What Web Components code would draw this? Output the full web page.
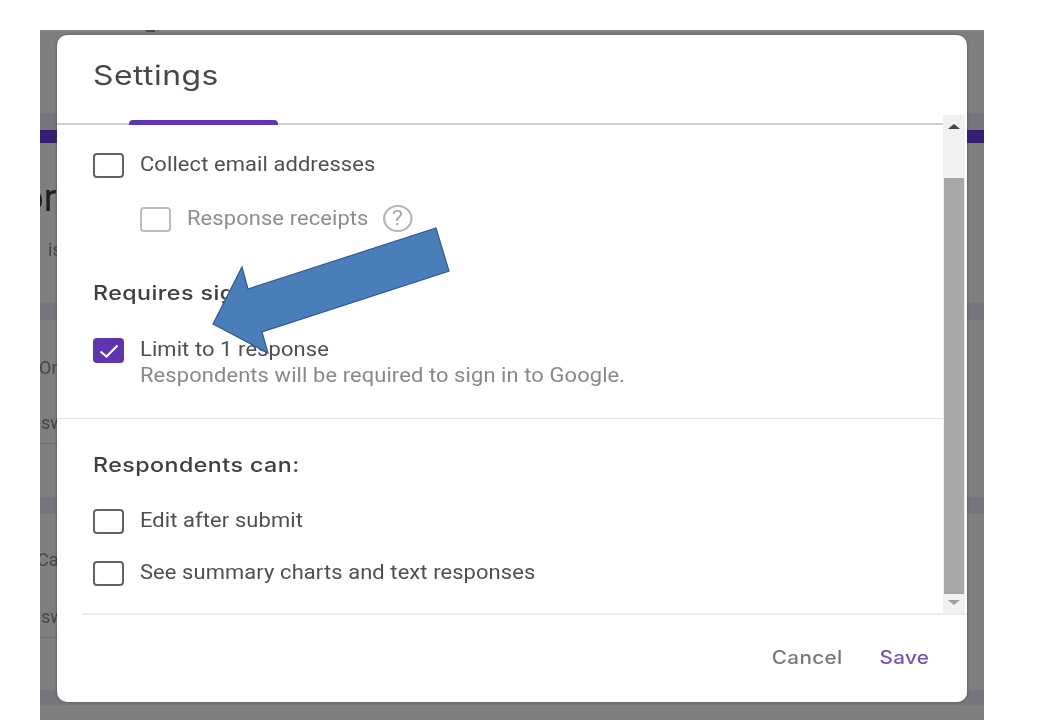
<!DOCTYPE html>
<html>
<head>
<meta charset="utf-8">
<style>
  html, body { margin: 0; padding: 0; background: #fff; }
  body { width: 1040px; height: 720px; overflow: hidden; }
</style>
</head>
<body>
<settings-screen>
  <settings-dialog>
    <span slot="title">Settings</span>

    <check-row>Collect email addresses</check-row>
    <check-row sub disabled>Response receipts<help-badge slot="after"></help-badge></check-row>
    <section-title style="margin-top:49px">Requires sign in:</section-title>
    <check-row checked style="margin-top:33px">Limit to 1 response
      <span slot="hint">Respondents will be required to sign in to Google.</span>
    </check-row>
    <hr-line style="margin-top:30px"></hr-line>
    <section-title style="margin-top:34px">Respondents can:</section-title>
    <check-row style="margin-top:32px">Edit after submit</check-row>
    <check-row style="margin-top:27px">See summary charts and text responses</check-row>
  </settings-dialog>
</settings-screen>

<script>
const backdropTemplate = document.createElement("template");
backdropTemplate.innerHTML = `
<style>
:host { display: block; height: 100%; overflow: hidden; font-family: Roboto, sans-serif; color: #3f3f3f; }
.mark { height: 2px; width: 9px; margin-left: 106px; background: #4a4a4a; }
.band { height: 17px; background: #79757f; }
.purple { height: 13px; background: #341f72; }
.txt { height: 20px; line-height: 20px; font-size: 18px; white-space: nowrap; color: #454545; }
.big { height: 34px; line-height: 34px; font-size: 38px; color: #1d1d1d; }
.line { height: 1px; width: 22px; background: #6e6e6e; }
</style>
<div class="mark"></div>
<div class="band" style="margin-top:81px"></div>
<div class="purple"></div>
<div class="txt big" style="margin-top:38px;margin-left:-18px">or</div>
<div class="txt" style="margin-top:25px;margin-left:8px">is</div>
<div class="band" style="margin-top:43px"></div>
<div class="txt" style="margin-top:38px;margin-left:-1px">Or</div>
<div class="txt" style="margin-top:35px;margin-left:1px">sw</div>
<div class="line" style="margin-top:10px"></div>
<div class="band" style="margin-top:53px"></div>
<div class="txt" style="margin-top:36px;margin-left:-3px">Ca</div>
<div class="txt" style="margin-top:37px;margin-left:1px">sw</div>
<div class="line" style="margin-top:10px"></div>
<div class="band" style="margin-top:52px;height:15px"></div>
`;

class FormBackdrop extends HTMLElement {
  constructor() {
    super();
    this.attachShadow({ mode: "open" });
    this.shadowRoot.appendChild(backdropTemplate.content.cloneNode(true));
  }
}
customElements.define("form-backdrop", FormBackdrop);

const screenTemplate = document.createElement("template");
screenTemplate.innerHTML = `
<style>
:host { display: block; position: relative; width: 944px; height: 690px; margin: 30px 0 0 40px; background: #7f7f7f; filter: blur(.4px); }
.modal { position: absolute; top: 5px; left: 17px; }
.arrow { position: absolute; left: 170px; top: 195px; pointer-events: none; }
</style>
<form-backdrop></form-backdrop>
<div class="modal"><slot></slot></div>
<svg class="arrow" width="245" height="135" viewBox="210 225 245 135">
  <polygon points="436,228 449,271 262,332 268,353 213,324 242,267 248,289"
    fill="#4a7ebb" stroke="#2f5b8f" stroke-width="1.2"/>
</svg>
`;

class SettingsScreen extends HTMLElement {
  constructor() {
    super();
    this.attachShadow({ mode: "open" });
    this.shadowRoot.appendChild(screenTemplate.content.cloneNode(true));
  }
}
customElements.define("settings-screen", SettingsScreen);

const dialogTemplate = document.createElement("template");
dialogTemplate.innerHTML = `
<style>
:host {
  display: grid;
  grid-template-columns: 886px 22px;
  width: 910px;
  height: 667px;
  background: #fff;
  border-radius: 10px;
  font-family: Roboto, sans-serif;
  box-shadow: 0 0 3px rgba(60,60,60,.7);
  overflow: hidden;
}
.main { display: flex; flex-direction: column; min-width: 0; }
header {
  height: 88px;
  flex: none;
  border-bottom: 2px solid #cfcfcf;
  padding-left: 36px;
  position: relative;
}
.title {
  font-family: Inter, sans-serif;
  font-size: 27px;
  line-height: 36px;
  margin-top: 23px;
  letter-spacing: .4px;
  color: #45484b;
  transform: scaleX(1.18);
  transform-origin: left;
}
.tab {
  position: absolute;
  left: 72px;
  bottom: -2px;
  width: 149px;
  height: 5px;
  border-radius: 4px 4px 0 0;
  background: #5e35b1;
}
.body { flex: 1; padding: 28px 0 0 36px; }
footer {
  flex: none;
  height: 85px;
  margin-left: 25px;
  border-top: 2px solid #ebebeb;
  display: flex;
  align-items: center;
  justify-content: flex-end;
  gap: 43px;
  margin-right: -24px;
  padding: 0 38px 2px 0;
  font-family: Inter, sans-serif;
  font-size: 18px;
  font-weight: 500;
  letter-spacing: .3px;
  background: #fff;
  position: relative;
}
footer span { display: inline-block; transform: scaleX(1.15); transform-origin: right; }
.cancel { color: #77797d; }
.save { color: #7553b8; }
.bar { display: flex; flex-direction: column; padding: 80px 0 89px; }
</style>
<div class="main">
  <header>
    <div class="title"><slot name="title"></slot></div>
    <div class="tab"></div>
  </header>
  <div class="body"><slot></slot></div>
  <footer><span class="cancel">Cancel</span><span class="save">Save</span></footer>
</div>
<div class="bar"><scroll-bar></scroll-bar></div>
`;

class SettingsDialog extends HTMLElement {
  constructor() {
    super();
    this.attachShadow({ mode: "open" });
    this.shadowRoot.appendChild(dialogTemplate.content.cloneNode(true));
  }
}
customElements.define("settings-dialog", SettingsDialog);

const barTemplate = document.createElement("template");
barTemplate.innerHTML = `
<style>
:host { display: flex; flex-direction: column; flex: 1; background: #f1f1f1; align-items: center; }
.up, .down { width: 0; height: 0; border-left: 6px solid transparent; border-right: 6px solid transparent; }
.up { border-bottom: 5px solid #444; margin-top: 9px; }
.thumb { width: 20px; height: 416px; background: #a8a8a8; margin-top: 49px; }
.down { border-top: 5px solid #a0a0a0; margin-top: 6px; }
</style>
<div class="up"></div>
<div class="thumb"></div>
<div class="down"></div>
`;

class ScrollBar extends HTMLElement {
  constructor() {
    super();
    this.attachShadow({ mode: "open" });
    this.shadowRoot.appendChild(barTemplate.content.cloneNode(true));
  }
}
customElements.define("scroll-bar", ScrollBar);

const rowTemplate = document.createElement("template");
rowTemplate.innerHTML = `
<style>
:host { display: flex; gap: 16px; align-items: flex-start; color: #4c4f53; font-size: 20px; letter-spacing: .1px; }
:host([sub]) { margin: 29px 0 0 47px; }
:host([disabled]) { color: #8a8d91; }
.box {
  flex: none;
  box-sizing: border-box;
  width: 31px;
  height: 25px;
  border: 2px solid #5f6368;
  border-radius: 4px;
  display: flex;
  align-items: center;
  justify-content: center;
}
:host([disabled]) .box { border-color: #bdbdbd; }
:host([checked]) .box { background: #5e35b1; border-color: #5e35b1; }
svg { display: none; }
:host([checked]) svg { display: block; }
.text { line-height: 26px; margin-top: -2px; white-space: nowrap; display: flex; flex-direction: column; transform: scaleX(1.095); transform-origin: left; }
.line { display: flex; align-items: center; height: 26px; }
.hint { color: #85888c; }
</style>
<div class="box">
  <svg width="22" height="16" viewBox="0 0 22 16"><path d="M2.5 8.5 L8.5 13.5 L19.5 2.5" fill="none" stroke="#fff" stroke-width="2.2"/></svg>
</div>
<div class="text">
  <div class="line"><slot></slot><slot name="after"></slot></div>
  <div class="hint"><slot name="hint"></slot></div>
</div>
`;

class CheckRow extends HTMLElement {
  constructor() {
    super();
    this.attachShadow({ mode: "open" });
    this.shadowRoot.appendChild(rowTemplate.content.cloneNode(true));
  }
}
customElements.define("check-row", CheckRow);

const titleTemplate = document.createElement("template");
titleTemplate.innerHTML = `
<style>
:host { display: block; font-family: Inter, sans-serif; font-size: 20px; font-weight: 500; line-height: 24px; letter-spacing: .4px; color: #3c4043; transform: scaleX(1.16); transform-origin: left; }
</style>
<slot></slot>
`;

class SectionTitle extends HTMLElement {
  constructor() {
    super();
    this.attachShadow({ mode: "open" });
    this.shadowRoot.appendChild(titleTemplate.content.cloneNode(true));
  }
}
customElements.define("section-title", SectionTitle);

const lineTemplate = document.createElement("template");
lineTemplate.innerHTML = `
<style>
:host { display: block; height: 1px; background: #e2e2e2; margin-left: -36px; }
</style>
`;

class HrLine extends HTMLElement {
  constructor() {
    super();
    this.attachShadow({ mode: "open" });
    this.shadowRoot.appendChild(lineTemplate.content.cloneNode(true));
  }
}
customElements.define("hr-line", HrLine);

const helpTemplate = document.createElement("template");
helpTemplate.innerHTML = `
<style>
:host {
  display: inline-flex;
  box-sizing: border-box;
  width: 27px;
  height: 27px;
  margin: 0 0 0 13px;
  border: 2px solid #b5b5b5;
  border-radius: 50%;
  align-items: center;
  justify-content: center;
  font-size: 21px;
  letter-spacing: 0;
  color: #a5a5a5;
}
</style>
?
`;

class HelpBadge extends HTMLElement {
  constructor() {
    super();
    this.attachShadow({ mode: "open" });
    this.shadowRoot.appendChild(helpTemplate.content.cloneNode(true));
  }
}
customElements.define("help-badge", HelpBadge);
</script>
</body>
</html>
